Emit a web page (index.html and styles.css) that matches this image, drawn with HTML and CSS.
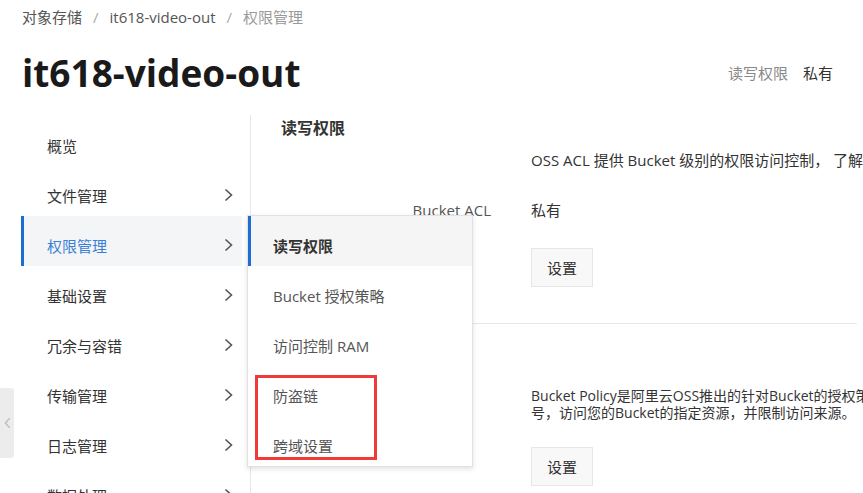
FILE: index.html
```
<!DOCTYPE html>
<html lang="zh-CN">
<head>
<meta charset="utf-8">
<title>it618-video-out - 权限管理</title>
<link rel="stylesheet" href="styles.css">
</head>
<body>
<div class="breadcrumb">
  <span class="crumb">对象存储</span><span class="sep">/</span><span class="crumb">it618-video-out</span><span class="sep">/</span><span class="crumb current">权限管理</span>
</div>
<div class="header">
  <h1 class="title">it618-video-out</h1>
  <div class="meta"><span class="meta-label">读写权限</span><span class="meta-value">私有</span></div>
</div>
<div class="main">
  <ul class="sidebar">
    <li class="nav-item"><span>概览</span></li>
    <li class="nav-item"><span>文件管理</span><svg class="chev" viewBox="0 0 9 14"><path d="M1.5 1.5 L7.5 7 L1.5 12.5"/></svg></li>
    <li class="nav-item active"><span>权限管理</span><svg class="chev" viewBox="0 0 9 14"><path d="M1.5 1.5 L7.5 7 L1.5 12.5"/></svg></li>
    <li class="nav-item"><span>基础设置</span><svg class="chev" viewBox="0 0 9 14"><path d="M1.5 1.5 L7.5 7 L1.5 12.5"/></svg></li>
    <li class="nav-item"><span>冗余与容错</span><svg class="chev" viewBox="0 0 9 14"><path d="M1.5 1.5 L7.5 7 L1.5 12.5"/></svg></li>
    <li class="nav-item"><span>传输管理</span><svg class="chev" viewBox="0 0 9 14"><path d="M1.5 1.5 L7.5 7 L1.5 12.5"/></svg></li>
    <li class="nav-item"><span>日志管理</span><svg class="chev" viewBox="0 0 9 14"><path d="M1.5 1.5 L7.5 7 L1.5 12.5"/></svg></li>
    <li class="nav-item"><span>数据处理</span><svg class="chev" viewBox="0 0 9 14"><path d="M1.5 1.5 L7.5 7 L1.5 12.5"/></svg></li>
  </ul>
  <div class="content">
    <section class="section first">
      <h2 class="sec-title">读写权限</h2>
      <div class="row desc-row"><div class="label"></div><div class="value">OSS ACL 提供 Bucket 级别的权限访问控制， 了解更多</div></div>
      <div class="row acl-row"><div class="label">Bucket ACL</div><div class="value">私有</div></div>
      <div class="row btn-row"><div class="label"></div><div class="value"><button class="btn">设置</button></div></div>
    </section>
    <section class="section second">
      <div class="sec-spacer"></div>
      <div class="row policy-row"><div class="label"></div><div class="value policy">Bucket Policy是阿里云OSS推出的针对Bucket的授权策略，您可以通过Bucket Policy授权其他用户或其他账<br>号，访问您的Bucket的指定资源，并限制访问来源。</div></div>
      <div class="row btn-row2"><div class="label"></div><div class="value"><button class="btn">设置</button></div></div>
    </section>
  </div>
  <ul class="submenu">
    <li class="sub-item active">读写权限</li>
    <li class="sub-item">Bucket 授权策略</li>
    <li class="sub-item">访问控制 RAM</li>
    <li class="sub-item">防盗链</li>
    <li class="sub-item">跨域设置</li>
  </ul>
  <div class="highlight"></div>
  <div class="collapse"><svg viewBox="0 0 8 14"><path d="M6.5 1.5 L1.5 7 L6.5 12.5"/></svg></div>
</div>
</body>
</html>
```
FILE: styles.css
```
html, body {
  margin: 0;
  padding: 0;
  overflow: hidden;
  background: #fff;
}
body {
  width: 863px;
  height: 493px;
  font-family: "Open Sans", "Noto Sans CJK SC", sans-serif;
  font-size: 15px;
  color: #333;
}
ul { list-style: none; margin: 0; padding: 0; }

.breadcrumb {
  height: 34px;
  line-height: 34px;
  padding-left: 22px;
  font-size: 15px;
  color: #555;
}
.breadcrumb .sep {
  color: #aaa;
  margin: 0 11px;
}
.breadcrumb .current { color: #999; }

.header {
  display: flex;
  align-items: center;
  justify-content: space-between;
  height: 76px;
  padding: 0 30px 0 22px;
}
.title {
  margin: 0;
  font-size: 37px;
  font-weight: 700;
  color: #1a1a1a;
}
.meta { font-size: 15px; }
.meta-label { color: #888; margin-right: 15px; }
.meta-value { color: #333; }

.main {
  position: relative;
  display: flex;
  margin-top: 5px;
  height: 378px;
}
.sidebar {
  width: 221px;
  margin-left: 21px;
  margin-right: 8px;
  padding-top: 1px;
  flex: none;
}
.nav-item {
  display: flex;
  align-items: center;
  justify-content: space-between;
  height: 50px;
  padding: 8px 9px 0 26px;
  box-sizing: border-box;
  color: #333;
  font-size: 15px;
}
.nav-item.active {
  background: #f4f5f7;
  border-left: 3px solid #1c6ed1;
  padding-left: 23px;
  color: #3a7fd6;
}
.chev {
  width: 9px;
  height: 14px;
  fill: none;
  stroke: #555;
  stroke-width: 1.6;
}
.content {
  flex: 1;
  border-left: 1px solid #e6e6e6;
  min-width: 0;
}
.section { padding-left: 30px; }
.sec-title {
  margin: 0;
  font-size: 16px;
  font-weight: 700;
  color: #333;
  height: 26px;
  line-height: 26px;
}
.row {
  display: grid;
  grid-template-columns: 210px auto;
  column-gap: 40px;
  white-space: nowrap;
  font-size: 15px;
}
.label { text-align: right; color: #555; }
.value { color: #333; }
.desc-row { margin-top: 9px; line-height: 20px; }
.acl-row { margin-top: 30px; line-height: 20px; }
.btn-row { margin-top: 28px; padding-bottom: 36px; border-bottom: 1px solid #e6e6e6; margin-right: 6px; }
.btn {
  display: block;
  width: 62px;
  height: 39px;
  border: 1px solid #e6e6e6;
  background: #f8f8f8;
  font-family: inherit;
  font-size: 15px;
  color: #333;
  padding: 0;
}
.sec-spacer { height: 44px; }
.policy-row { margin-top: 19px; line-height: 17px; font-size: 14px; }
.btn-row2 { margin-top: 26px; }

.submenu {
  position: absolute;
  left: 247px;
  top: 100px;
  width: 224px;
  padding: 0;
  background: #fff;
  border: 1px solid #e2e2e2;
  box-shadow: 0 2px 5px rgba(0,0,0,0.12);
}
.sub-item {
  height: 50px;
  box-sizing: border-box;
  padding: 8px 0 0 25px;
  display: flex;
  align-items: center;
  font-size: 15px;
  color: #555;
}
.sub-item.active {
  background: #f5f5f5;
  border-left: 3px solid #1c6ed1;
  padding-left: 22px;
  color: #333;
  font-weight: 700;
}
.highlight {
  position: absolute;
  left: 255px;
  top: 260px;
  width: 116px;
  height: 79px;
  border: 3px solid #f03a3a;
}
.collapse {
  position: absolute;
  left: 0;
  top: 273px;
  width: 14px;
  height: 70px;
  background: #ececec;
  border-radius: 0 3px 3px 0;
  display: flex;
  align-items: center;
  justify-content: center;
}
.collapse svg {
  width: 7px;
  height: 12px;
  fill: none;
  stroke: #bbb;
  stroke-width: 1.5;
}
```
